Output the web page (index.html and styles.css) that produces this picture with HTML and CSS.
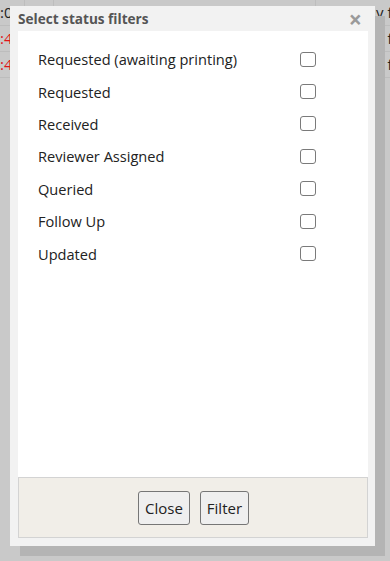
FILE: index.html
```html
<!DOCTYPE html>
<html>
<head>
<meta charset="utf-8">
<link rel="stylesheet" href="styles.css">
</head>
<body>
<div class="page">
  <div class="grid">
    <div class="row"><span class="c1">:0</span><span class="c2"></span><span class="c3"></span><span class="c4">y fo</span></div>
    <div class="row"><span class="c1 red">:4</span><span class="c2"></span><span class="c3"></span><span class="c4">y fo</span></div>
    <div class="row"><span class="c1 red">:4</span><span class="c2"></span><span class="c3"></span><span class="c4">y fo</span></div>
  </div>
</div>
<div class="dialog">
  <div class="dlg-head">
    <span class="dlg-title">Select status filters</span>
    <span class="dlg-x">×</span>
  </div>
  <div class="dlg-body">
    <label class="opt"><span>Requested (awaiting printing)</span><span class="cb"></span></label>
    <label class="opt"><span>Requested</span><span class="cb"></span></label>
    <label class="opt"><span>Received</span><span class="cb"></span></label>
    <label class="opt"><span>Reviewer Assigned</span><span class="cb"></span></label>
    <label class="opt"><span>Queried</span><span class="cb"></span></label>
    <label class="opt"><span>Follow Up</span><span class="cb"></span></label>
    <label class="opt"><span>Updated</span><span class="cb"></span></label>
  </div>
  <div class="dlg-foot">
    <button class="btn">Close</button>
    <button class="btn">Filter</button>
  </div>
</div>
</body>
</html>
```
FILE: styles.css
```css
html, body {
  margin: 0;
  padding: 0;
}
body {
  width: 390px;
  height: 561px;
  overflow: hidden;
  background: #c9c9c9;
  font-family: "Open Sans", "Liberation Sans", sans-serif;
  position: relative;
}
.page {
  height: 561px;
}
.grid {
  display: flex;
  flex-direction: column;
}
.row {
  display: flex;
  height: 26px;
  border-bottom: 1px solid #bdbdbd;
  box-sizing: border-box;
  font-size: 15px;
  line-height: 25px;
  color: #1e1e1e;
}
.row span {
  box-sizing: border-box;
  border-right: 1px solid #bdbdbd;
  overflow: hidden;
  white-space: nowrap;
}
.c1 { width: 25px; }
.c2 { width: 29px; }
.c3 { width: 262px; }
.c4 { flex: 1; padding-left: 60px; border-right: none !important; }
.red { color: #e0141a; }

.dialog {
  position: absolute;
  left: 10px;
  top: 6px;
  width: 365px;
  height: 540px;
  background: #f2f2f2;
  box-shadow: 10px 10px 0 #b4b4b4;
  display: flex;
  flex-direction: column;
  padding: 0 7px 8px 8px;
  box-sizing: border-box;
}
.dlg-head {
  height: 25px;
  display: flex;
  align-items: center;
  justify-content: space-between;
  flex-shrink: 0;
}
.dlg-title {
  font-weight: bold;
  font-size: 13.6px;
  color: #555;
}
.dlg-x {
  font-size: 23px;
  font-weight: bold;
  color: #9a9a9a;
  line-height: 20px;
  margin-right: 6px;
}
.dlg-body {
  flex: 1;
  background: #fff;
  padding: 12px 52px 0 20px;
  display: flex;
  flex-direction: column;
}
.opt {
  display: flex;
  justify-content: space-between;
  align-items: center;
  height: 32.4px;
  font-size: 14.6px;
  color: #222;
}
.cb {
  width: 14px;
  height: 13px;
  border: 1px solid #7a7a7a;
  border-radius: 3px;
  background: #fff;
}
.dlg-foot {
  height: 61px;
  flex-shrink: 0;
  background: #f1eee8;
  border: 1px solid #d3d3d3;
  box-sizing: border-box;
  display: flex;
  justify-content: center;
  align-items: center;
  gap: 10px;
  padding-left: 1px;
}
.btn {
  height: 34px;
  padding: 0 6px;
  background: #efefef;
  border: 1px solid #767676;
  border-radius: 3px;
  font-family: "Open Sans", "Liberation Sans", sans-serif;
  font-size: 15px;
  color: #222;
}
```
